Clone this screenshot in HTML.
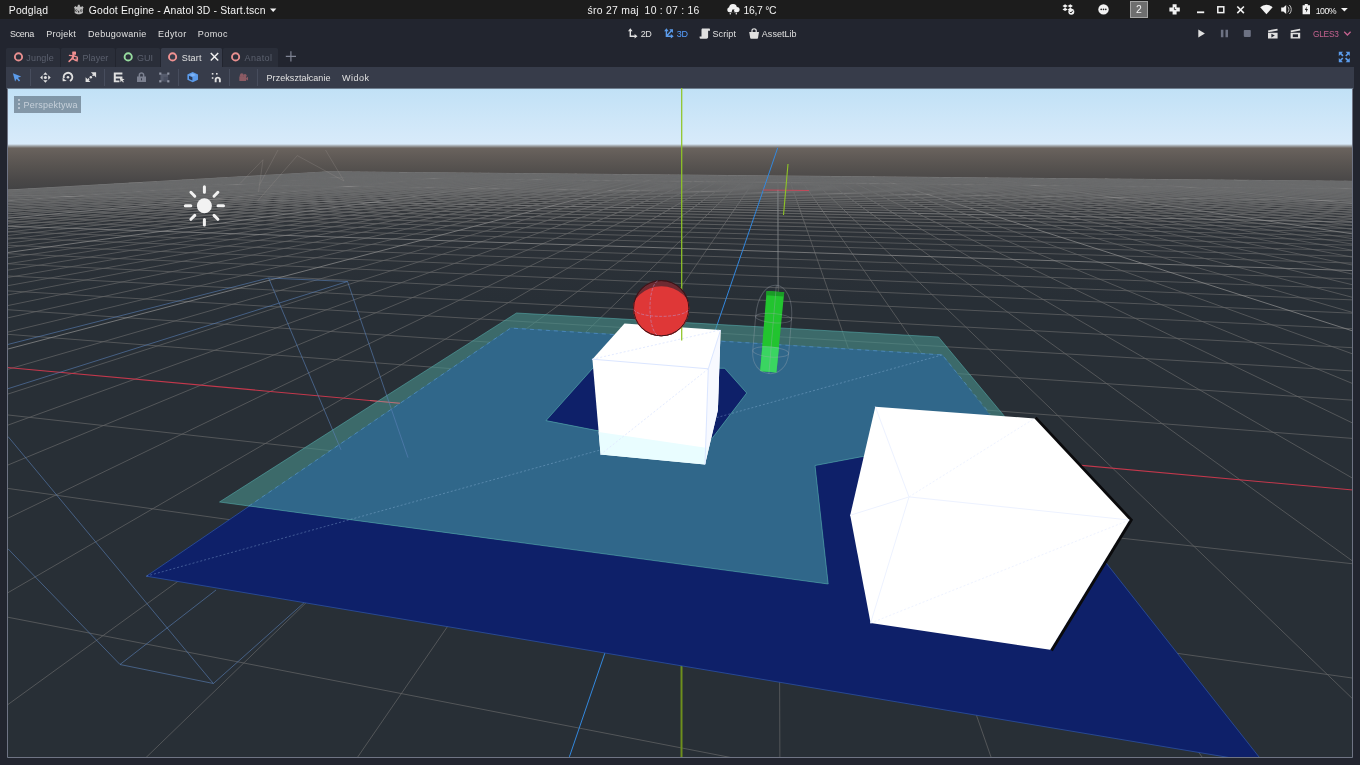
<!DOCTYPE html><html lang="pl"><head><meta charset="utf-8"><title>Godot Engine - Anatol 3D - Start.tscn</title><style>
html,body{margin:0;padding:0;background:#22252f;overflow:hidden}body{width:1360px;height:765px;position:relative;font-family:"Liberation Sans", sans-serif;-webkit-font-smoothing:antialiased}.a{position:absolute}.t{position:absolute;white-space:nowrap;line-height:1;margin:0;padding:0}#os{left:0;top:0;width:1360px;height:18.8px;background:#1c1c1c}.tab{top:48px;height:19px;background:#2a2e39;border-radius:1.5px 1.5px 0 0}.tab.sel{background:#373c4a}#bar{left:6.4px;top:66.6px;width:1347.4px;height:22px;background:#373c4a}#vp{position:absolute;left:7px;top:88px}#ic{position:absolute;left:0;top:0}#txt{position:absolute;left:0;top:0;width:1360px;height:765px;will-change:transform}
</style></head><body>
<div id="os" class="a"></div>
<div class="a tab" style="left:6.4px;width:53.8px"></div>
<div class="a tab" style="left:61.2px;width:53.8px"></div>
<div class="a tab" style="left:116.0px;width:44.2px"></div>
<div class="a tab sel" style="left:160.7px;width:61.4px"></div>
<div class="a tab" style="left:223.1px;width:55.1px"></div>
<div id="bar" class="a"></div>
<svg id="vp" width="1346" height="670" viewBox="7 88 1346 670">
<defs><linearGradient id="sky" x1="0" y1="89" x2="0" y2="146" gradientUnits="userSpaceOnUse"><stop offset="0" stop-color="#c1e1f6"/><stop offset="0.5" stop-color="#cde6f8"/><stop offset="1" stop-color="#d9ebfa"/></linearGradient><linearGradient id="gnd" x1="0" y1="146" x2="0" y2="300" gradientUnits="userSpaceOnUse"><stop offset="0" stop-color="#6c655f"/><stop offset="0.065" stop-color="#615b57"/><stop offset="0.13" stop-color="#575350"/><stop offset="0.22" stop-color="#4a4848"/><stop offset="0.35" stop-color="#3a3c3f"/><stop offset="0.55" stop-color="#2d3238"/><stop offset="1" stop-color="#282f36"/></linearGradient><linearGradient id="hor" x1="0" y1="144" x2="0" y2="148" gradientUnits="userSpaceOnUse"><stop offset="0" stop-color="#d9ebfa"/><stop offset="0.45" stop-color="#a3a9ad"/><stop offset="1" stop-color="#6c655f"/></linearGradient><linearGradient id="farg" x1="0" y1="170" x2="0" y2="238" gradientUnits="userSpaceOnUse"><stop offset="0" stop-color="#fff"/><stop offset="0.3" stop-color="#fff"/><stop offset="1" stop-color="#000"/></linearGradient><mask id="farm" maskUnits="userSpaceOnUse" x="0" y="160" width="1360" height="80"><rect x="0" y="160" width="1360" height="80" fill="url(#farg)"/></mask><clipPath id="navyclip"><polygon points="510.8,328.1 942.2,354.9 1264.1,763.4 146.4,576.2"/></clipPath></defs>
<rect x="7" y="88.6" width="1346" height="58" fill="url(#sky)"/>
<rect x="7" y="146" width="1346" height="612" fill="url(#gnd)"/>
<rect x="7" y="144" width="1346" height="4" fill="url(#hor)"/>
<g fill="none" stroke-width="1" shape-rendering="auto">
<path stroke="#646566" stroke-opacity=".72" d="M336.8 171.9L0.0 191.4M322.2 172.2L1360.0 182.0M344.5 172.0L0.0 192.3M315.0 172.6L1360.0 182.7M352.1 172.0L0.0 193.2M307.5 173.0L1360.0 183.3M359.9 172.1L0.0 194.2M299.7 173.5L1360.0 184.1M367.6 172.2L0.0 195.3M291.7 173.9L1360.0 184.8M375.4 172.2L0.0 196.4M283.4 174.4L1360.0 185.6M383.2 172.3L0.0 197.5M274.9 174.9L1360.0 186.4M391.1 172.4L0.0 198.7M266.0 175.4L1360.0 187.2M399.1 172.5L0.0 199.9M256.8 175.9L1360.0 188.1M415.1 172.6L0.0 202.6M237.4 177.0L1360.0 190.0M423.1 172.7L0.0 204.1M227.2 177.6L1360.0 191.0M431.2 172.8L-0.0 205.6M216.6 178.2L1360.0 192.0M439.4 172.8L0.0 207.2M205.5 178.8L1360.0 193.1M447.6 172.9L0.0 208.9M194.0 179.5L1360.0 194.3M455.8 173.0L0.0 210.7M182.0 180.2L1360.0 195.5M464.1 173.1L0.0 212.6M169.5 180.9L1360.0 196.7M472.5 173.1L0.0 214.6M156.5 181.6L1360.0 198.1M480.9 173.2L0.0 216.7M142.9 182.4L1360.0 199.5M497.8 173.4L-0.0 221.4M113.9 184.0L1360.0 202.6M506.4 173.5L0.0 224.0M98.4 184.9L1360.0 204.2M515.0 173.5L0.0 226.8M82.1 185.8L1360.0 206.0M523.6 173.6L0.0 229.7M65.0 186.8L1360.0 207.9M532.3 173.7L0.0 232.9M47.1 187.8L1360.0 209.9M541.1 173.8L0.0 236.4M28.2 188.9L1360.0 212.0M549.9 173.9L0.0 240.2M8.3 190.0L1360.0 214.3M558.7 173.9L0.0 244.2M0.0 191.4L1360.0 216.8M567.6 174.0L0.0 248.7M0.0 193.1L1360.0 219.4M585.6 174.2L0.0 258.9M0.0 196.9L1360.0 225.4M594.6 174.3L0.0 264.9M0.0 199.1L1360.0 228.7M603.8 174.4L0.0 271.4M0.0 201.4L1360.0 232.3M612.9 174.4L0.0 278.8M0.0 203.9L1360.0 236.3M622.2 174.5L0.0 287.1M0.0 206.7L1360.0 240.6M631.5 174.6L0.0 296.5M-0.0 209.8L1360.0 245.4M640.8 174.7L0.0 307.2M0.0 213.2L1360.0 250.8M650.2 174.8L0.0 319.6M0.0 217.0L1360.0 256.7M659.7 174.9L0.0 334.0M0.0 221.2L1360.0 263.3M678.8 175.0L0.0 371.6M0.0 231.4L1360.0 279.2M688.4 175.1L0.0 396.6M0.0 237.7L1360.0 289.0M698.1 175.2L0.0 428.0M0.0 244.9L1360.0 300.2M707.9 175.3L0.0 468.3M0.0 253.3L1360.0 313.5M717.7 175.4L0.0 522.0M0.0 263.4L1360.0 329.1M727.6 175.5L0.0 597.3M0.0 275.5L1360.0 348.1M737.5 175.6L0.0 710.3M0.0 290.4L1360.0 371.4M747.5 175.7L138.3 765.0M-0.0 309.2L1360.0 400.7M757.6 175.8L352.2 765.0M0.0 333.7L1360.0 439.0M777.9 176.0L779.9 765.0M0.0 414.1L1360.0 564.6M788.2 176.1L993.8 765.0M0.0 487.3L1360.0 679.1M798.5 176.2L1207.6 765.0M0.0 615.7L769.4 765.0M808.9 176.3L1360.0 705.9M819.4 176.3L1360.0 566.4M830.0 176.4L1360.0 482.5M840.6 176.5L1360.0 426.6M851.2 176.6L1360.0 386.6M862.0 176.7L1360.0 356.6M883.7 176.9L1360.0 314.6M894.6 177.0L1360.0 299.3M905.7 177.1L1360.0 286.6M916.8 177.3L1360.0 275.8M927.9 177.4L1360.0 266.6M939.2 177.5L1360.0 258.6M950.5 177.6L1360.0 251.6M961.9 177.7L1360.0 245.4M973.4 177.8L1360.0 239.9M996.6 178.0L1360.0 230.5M1008.4 178.1L1360.0 226.5M1020.2 178.2L1360.0 222.9M1032.0 178.3L1360.0 219.6M1044.0 178.4L1360.0 216.5M1056.1 178.5L1360.0 213.7M1068.2 178.7L1360.0 211.1M1080.4 178.8L1360.0 208.7M1092.7 178.9L1360.0 206.5M1117.6 179.1L1360.0 202.5M1130.2 179.2L1360.0 200.7M1142.8 179.3L1360.0 199.0M1155.6 179.5L1360.0 197.4M1168.4 179.6L1360.0 195.9M1181.3 179.7L1360.0 194.5M1194.4 179.8L1360.0 193.1M1207.5 179.9L1360.0 191.9M1220.7 180.1L1360.0 190.7M1247.4 180.3L1360.0 188.5M1260.9 180.4L1360.0 187.4M1274.5 180.6L1360.0 186.4M1288.3 180.7L1360.0 185.5M1302.1 180.8L1360.0 184.6M1316.0 180.9L1360.0 183.8M1330.0 181.1L1360.0 183.0M1344.1 181.2L1360.0 182.2M1358.4 181.3L1360.0 181.4"/>
<path stroke="#8f8f8f" stroke-opacity=".72" d="M329.3 171.8L0.0 190.5M329.3 171.8L1360.0 181.4M407.0 172.5L0.0 201.3M247.3 176.5L1360.0 189.0M489.3 173.3L0.0 219.0M128.7 183.2L1360.0 201.0M576.6 174.1L0.0 253.6M-0.0 195.0L1360.0 222.3M669.2 175.0L0.0 351.1M0.0 226.0L1360.0 270.8M872.8 176.8L1360.0 333.3M985.0 177.9L1360.0 235.0M1105.1 179.0L1360.0 204.4M1234.0 180.2L1360.0 189.5"/>
<g mask="url(#farm)"><path stroke="#6a6b6c" d="M336.8 171.9L0.0 191.4M322.2 172.2L1360.0 182.0M344.5 172.0L0.0 192.3M315.0 172.6L1360.0 182.7M352.1 172.0L0.0 193.2M307.5 173.0L1360.0 183.3M359.9 172.1L0.0 194.2M299.7 173.5L1360.0 184.1M367.6 172.2L0.0 195.3M291.7 173.9L1360.0 184.8M375.4 172.2L0.0 196.4M283.4 174.4L1360.0 185.6M383.2 172.3L0.0 197.5M274.9 174.9L1360.0 186.4M391.1 172.4L0.0 198.7M266.0 175.4L1360.0 187.2M399.1 172.5L0.0 199.9M256.8 175.9L1360.0 188.1M415.1 172.6L0.0 202.6M237.4 177.0L1360.0 190.0M423.1 172.7L0.0 204.1M227.2 177.6L1360.0 191.0M431.2 172.8L-0.0 205.6M216.6 178.2L1360.0 192.0M439.4 172.8L0.0 207.2M205.5 178.8L1360.0 193.1M447.6 172.9L0.0 208.9M194.0 179.5L1360.0 194.3M455.8 173.0L0.0 210.7M182.0 180.2L1360.0 195.5M464.1 173.1L0.0 212.6M169.5 180.9L1360.0 196.7M472.5 173.1L0.0 214.6M156.5 181.6L1360.0 198.1M480.9 173.2L0.0 216.7M142.9 182.4L1360.0 199.5M497.8 173.4L-0.0 221.4M113.9 184.0L1360.0 202.6M506.4 173.5L0.0 224.0M98.4 184.9L1360.0 204.2M515.0 173.5L0.0 226.8M82.1 185.8L1360.0 206.0M523.6 173.6L0.0 229.7M65.0 186.8L1360.0 207.9M532.3 173.7L0.0 232.9M47.1 187.8L1360.0 209.9M541.1 173.8L0.0 236.4M28.2 188.9L1360.0 212.0M549.9 173.9L0.0 240.2M8.3 190.0L1360.0 214.3M558.7 173.9L0.0 244.2M0.0 191.4L1360.0 216.8M567.6 174.0L0.0 248.7M0.0 193.1L1360.0 219.4M585.6 174.2L0.0 258.9M0.0 196.9L1360.0 225.4M594.6 174.3L0.0 264.9M0.0 199.1L1360.0 228.7M603.8 174.4L0.0 271.4M0.0 201.4L1360.0 232.3M612.9 174.4L0.0 278.8M0.0 203.9L1360.0 236.3M622.2 174.5L0.0 287.1M0.0 206.7L1360.0 240.6M631.5 174.6L0.0 296.5M-0.0 209.8L1360.0 245.4M640.8 174.7L0.0 307.2M0.0 213.2L1360.0 250.8M650.2 174.8L0.0 319.6M0.0 217.0L1360.0 256.7M659.7 174.9L0.0 334.0M0.0 221.2L1360.0 263.3M678.8 175.0L0.0 371.6M0.0 231.4L1360.0 279.2M688.4 175.1L0.0 396.6M0.0 237.7L1360.0 289.0M698.1 175.2L0.0 428.0M0.0 244.9L1360.0 300.2M707.9 175.3L0.0 468.3M0.0 253.3L1360.0 313.5M717.7 175.4L0.0 522.0M0.0 263.4L1360.0 329.1M727.6 175.5L0.0 597.3M0.0 275.5L1360.0 348.1M737.5 175.6L0.0 710.3M0.0 290.4L1360.0 371.4M747.5 175.7L138.3 765.0M-0.0 309.2L1360.0 400.7M757.6 175.8L352.2 765.0M0.0 333.7L1360.0 439.0M777.9 176.0L779.9 765.0M0.0 414.1L1360.0 564.6M788.2 176.1L993.8 765.0M0.0 487.3L1360.0 679.1M798.5 176.2L1207.6 765.0M0.0 615.7L769.4 765.0M808.9 176.3L1360.0 705.9M819.4 176.3L1360.0 566.4M830.0 176.4L1360.0 482.5M840.6 176.5L1360.0 426.6M851.2 176.6L1360.0 386.6M862.0 176.7L1360.0 356.6M883.7 176.9L1360.0 314.6M894.6 177.0L1360.0 299.3M905.7 177.1L1360.0 286.6M916.8 177.3L1360.0 275.8M927.9 177.4L1360.0 266.6M939.2 177.5L1360.0 258.6M950.5 177.6L1360.0 251.6M961.9 177.7L1360.0 245.4M973.4 177.8L1360.0 239.9M996.6 178.0L1360.0 230.5M1008.4 178.1L1360.0 226.5M1020.2 178.2L1360.0 222.9M1032.0 178.3L1360.0 219.6M1044.0 178.4L1360.0 216.5M1056.1 178.5L1360.0 213.7M1068.2 178.7L1360.0 211.1M1080.4 178.8L1360.0 208.7M1092.7 178.9L1360.0 206.5M1117.6 179.1L1360.0 202.5M1130.2 179.2L1360.0 200.7M1142.8 179.3L1360.0 199.0M1155.6 179.5L1360.0 197.4M1168.4 179.6L1360.0 195.9M1181.3 179.7L1360.0 194.5M1194.4 179.8L1360.0 193.1M1207.5 179.9L1360.0 191.9M1220.7 180.1L1360.0 190.7M1247.4 180.3L1360.0 188.5M1260.9 180.4L1360.0 187.4M1274.5 180.6L1360.0 186.4M1288.3 180.7L1360.0 185.5M1302.1 180.8L1360.0 184.6M1316.0 180.9L1360.0 183.8M1330.0 181.1L1360.0 183.0M1344.1 181.2L1360.0 182.2M1358.4 181.3L1360.0 181.4"/></g>
</g>
<path d="M0.0 366.8L1360.0 490.7" stroke="#c4384c" stroke-width="1.05" fill="none"/>
<path d="M777.7 147.8L569.4 756.8" stroke="#3388de" stroke-width="1" fill="none"/>
<path d="M681.5 660V757" stroke="#6d8f1c" stroke-width="2" fill="none"/>
<path d="M763 190L809 190.500" stroke="#c24a5a" stroke-width="1.200" fill="none"/>
<path d="M788 164L783.500 215" stroke="#8fc526" stroke-width="1.100" fill="none"/>
<path d="M240 183.500L263 159.700L258.500 192M278 150L259.400 185M257.600 201L297.300 155.600L344 181M325.500 150L344 181" stroke="#9a958f" stroke-opacity=".28" stroke-width="1" fill="none"/>
<polygon points="510.8,328.1 942.2,354.9 1264.1,763.4 146.4,576.2" fill="#0e2069" stroke="#2c50a3" stroke-width="1" stroke-opacity=".8"/>
<path d="M516.5 313.0L938.5 337.0L1004.0 415.7L1012.0 440.0L900.0 470.0L862.7 456.5L815.0 465.5L828.2 584.0L219.5 502.0ZM546.0 420.6L593.0 368.0L724.7 368.3L746.7 393.0L709.6 441.6L597.0 430.6Z" fill="#49938e" fill-opacity="0.6" fill-rule="evenodd"/>
<path d="M516.5 313.0L938.5 337.0L1004.0 415.7L1012.0 440.0L900.0 470.0L862.7 456.5L815.0 465.5L828.2 584.0L219.5 502.0ZM546.0 420.6L593.0 368.0L724.7 368.3L746.7 393.0L709.6 441.6L597.0 430.6Z" fill="#30678a" fill-rule="evenodd" clip-path="url(#navyclip)"/>
<path d="M248.7 506.2L510.75 328.1L942.2 354.9L990 413.7" stroke="#5b9bdc" stroke-opacity=".55" stroke-width="1" stroke-dasharray="4 4" fill="none"/>
<path d="M370 400.5L400 403.3" stroke="#e0707c" stroke-opacity=".6" stroke-width="1.1" fill="none"/>
<g stroke="#5a80b8" stroke-opacity=".6" stroke-width="1" fill="none"><path d="M268.600 278L347.500 281.500M268.600 278L341 449.800M347.500 281.500L408 457.600M268.600 278L7 344.700M347.500 281.500L7 389"/><path d="M8 436.500L213.400 683.500L120 664.500L8 548.800M120 664.500L216 590M213.400 683.500L303.800 603"/></g>
<path d="M146.3 576.2L942.2 354.9" stroke="#9fc4e8" stroke-opacity=".35" stroke-width="1" stroke-dasharray="2 2" fill="none"/>
<path d="M516.5 313.0L938.5 337.0L1004.0 415.7L1012.0 440.0L900.0 470.0L862.7 456.5L815.0 465.5L828.2 584.0L219.5 502.0ZM546.0 420.6L593.0 368.0L724.7 368.3L746.7 393.0L709.6 441.6L597.0 430.6Z" fill="none" stroke="#58b0b0" stroke-opacity=".55" stroke-width="1"/>
<polygon points="592.4,359.2 624.5,323.5 720.6,329.9 717.9,410.0 705.0,464.4 600.6,454.5" fill="#ffffff"/>
<polygon points="708.3,368.8 720.6,329.9 717.9,410.0 705.0,464.4" fill="#f7f9ff"/>
<polygon points="598.6,432.0 707.5,448.0 705.0,464.4 600.6,454.5" fill="#e9fdff"/>
<path d="M592.4 359.2L708.3 368.8L720.6 329.9M708.3 368.8L705 464.4" stroke="#dbe6ff" stroke-width="1" fill="none"/>
<path d="M592.4 359.2L720.6 329.9M708.3 368.8L600.6 454.5" stroke="#e3ebff" stroke-width="1" stroke-dasharray="2 2" fill="none"/>
<path d="M681.7 88V340.4" stroke="#8fc526" stroke-width="1.25" fill="none"/>
<clipPath id="sph"><circle cx="661.2" cy="308.2" r="28.1"/></clipPath>
<circle cx="661.2" cy="308.2" r="28.1" fill="#4a1a20"/>
<circle cx="661.2" cy="308.2" r="27.2" fill="#6e2a31"/>
<ellipse cx="661.4" cy="315.6" rx="31" ry="29.4" fill="#df3737" clip-path="url(#sph)"/>
<circle cx="661.2" cy="308.2" r="27.6" fill="none" stroke="#3a1418" stroke-width="1"/>
<path d="M633.8 309.5A27.5 7.5 0 0 0 688.6 309.5M657.5 281A9 27.5 0 0 0 658.5 335.6" stroke="#b9a0d8" stroke-opacity=".5" stroke-width="1" stroke-dasharray="3 1.5" fill="none"/>
<polygon points="766.6,291.0 784.2,292.3 776.4,372.6 760.2,371.0" fill="#22c42f"/>
<polygon points="762.4,346.0 779.0,347.2 776.4,372.6 760.2,371.0" fill="#3ad561"/>
<polygon points="766.6,291.0 784.2,292.3 783.8,296.6 766.2,295.2" fill="#1a9a27"/>
<g stroke="#a9aeb6" stroke-opacity=".32" stroke-width="1" fill="none"><path d="M777.9 190V288"/><g transform="rotate(4.8 772.3 329.5)"><path d="M754.6 318C754.6 274 790.6 274 790.6 318V352C790.6 381 754.6 381 754.6 352Z"/><ellipse cx="772.6" cy="318" rx="18" ry="4.6"/><ellipse cx="772.6" cy="352" rx="18" ry="5"/><path d="M772.6 285V374"/></g></g>
<path d="M1035.5 417.8L1131.2 520L1051.5 650.5" stroke="#0a0a0c" stroke-width="3" fill="none" stroke-linejoin="miter"/>
<polygon points="875.3,406.7 1034.5,418.4 1129.4,520.0 1050.2,649.8 870.6,623.1 850.2,515.3" fill="#ffffff"/>
<path d="M909 496.9L875.3 406.7M909 496.9L850.2 515.3M909 496.9L1129.4 520M909 496.9L870.6 623.1" stroke="#edf2ff" stroke-width="1" fill="none"/>
<path d="M909 496.9L1034.5 418.4M870.6 623.1L1129.4 520" stroke="#eef3ff" stroke-width="1" stroke-dasharray="2 2" fill="none"/>
<g stroke="#f2f2f2" stroke-width="3" stroke-linecap="round"><circle cx="204.4" cy="205.8" r="7.5" fill="#f2f2f2" stroke="none"/><path d="M218.0 205.8L223.5 205.8M214.0 215.4L217.9 219.3M204.4 219.4L204.4 224.9M194.8 215.4L190.9 219.3M190.8 205.8L185.3 205.8M194.8 196.2L190.9 192.3M204.4 192.2L204.4 186.7M214.0 196.2L217.9 192.3" fill="none"/></g>
<rect x="14" y="96" width="67" height="17" fill="#1a2230" fill-opacity="0.4"/>
<g fill="#c3cdd8" fill-opacity="0.8"><rect x="18" y="99" width="2" height="2"/><rect x="18" y="103" width="2" height="2"/><rect x="18" y="107" width="2" height="2"/></g>
<path d="M7.5 88.6V757.5H1352.5V88.6" fill="none" stroke="#6f7484" stroke-width="1"/>
</svg>
<svg id="ic" width="1360" height="89" viewBox="0 0 1360 89">
<!-- OS bar: godot app icon -->
<path d="M74 7.400l1.300-1.400 1.200 1.100 1.100-.5.300-1.900h1.800l.3 1.900 1.100.5 1.200-1.100 1.300 1.400-.7 1.300v4.300c-1.300.9-3 1.200-4.100 1.200s-2.800-.3-4.100-1.200v-4.300z" fill="#b9b9b9"/>
<g fill="#1c1c1c"><circle cx="76.300" cy="10.600" r="1.150"/><circle cx="81.100" cy="10.600" r="1.150"/><rect x="78.200" y="10.800" width="1" height="1.800"/></g>
<g fill="#e8e8e8"><circle cx="76.300" cy="10.600" r=".55"/><circle cx="81.100" cy="10.600" r=".55"/></g>
<path d="M270 8.600h6.400l-3.200 3.400z" fill="#f2f2f2"/>
<!-- weather -->
<g fill="#f2f2f2"><circle cx="733" cy="8" r="3.900"/><circle cx="729.800" cy="9.800" r="2.500"/><circle cx="736.900" cy="9.600" r="2.700"/><rect x="729.800" y="8.500" width="7.200" height="3.800"/></g>
<g fill="#1c1c1c"><path d="M732.400 9.500l2.200 0-1 1.800 1.200 0-2.600 3.200.6-2.300-1.200 0z"/></g>
<g fill="#f2f2f2"><circle cx="730.300" cy="13.800" r=".8"/><circle cx="736.300" cy="13.800" r=".8"/></g>
<!-- tray -->
<g fill="#f2f2f2"><path d="M1062.500 6l2.600-1.700 2.600 1.700-2.600 1.700zM1067.700 6l2.600-1.700 2.600 1.700-2.600 1.700zM1062.500 9.400l2.600-1.700 2.600 1.700-2.600 1.700zM1067.700 9.400l2.600-1.700 2.600 1.700-2.600 1.700z"/><circle cx="1071.300" cy="11.800" r="3"/></g>
<path d="M1069.800 11.900l1.100 1.100 2-2.300" stroke="#1c1c1c" stroke-width="1" fill="none"/>
<circle cx="1103.500" cy="9.400" r="5.200" fill="#f2f2f2"/>
<g fill="#1c1c1c"><circle cx="1101.200" cy="9.400" r=".8"/><circle cx="1103.500" cy="9.400" r=".8"/><circle cx="1105.800" cy="9.400" r=".8"/></g>
<rect x="1130.500" y="1.500" width="17" height="16" fill="#6e6e6e" stroke="#a4a4a4" stroke-width="1"/>
<path d="M1172.600 4.200h4v3.200h3.200v4h-3.200v3.200h-4v-3.200h-3.200v-4h3.200z" fill="#f2f2f2"/>
<path d="M1174.400 7.200v2.400h1.800" stroke="#1c1c1c" stroke-width=".8" fill="none"/>
<rect x="1197" y="11.400" width="7.200" height="1.800" fill="#f2f2f2"/>
<rect x="1217.800" y="6.800" width="6" height="5.800" fill="none" stroke="#f2f2f2" stroke-width="1.500"/>
<path d="M1237.300 6.500l6.600 6.600M1243.900 6.500l-6.600 6.600" stroke="#f2f2f2" stroke-width="1.600" fill="none"/>
<path d="M1260.200 7.300a8.800 8.800 0 0 1 12.400 0l-6.200 6.900z" fill="#f2f2f2"/>
<path d="M1281.200 7.600h2.200l2.800-2.600v9l-2.800-2.600h-2.200z" fill="#f2f2f2"/>
<path d="M1287.700 6.600a4 4 0 0 1 0 5.800M1289.400 5a6.300 6.300 0 0 1 0 9" stroke="#bdbdbd" stroke-width="1" fill="none"/>
<path d="M1304.800 4h3v1.200h2.200v9h-7.400v-9h2.200z" fill="#f2f2f2"/>
<path d="M1306.800 6.400l-2 3.600h1.500l-.5 2.800 2.200-3.800h-1.500z" fill="#1c1c1c"/>
<path d="M1341 8h6.800l-3.400 3.600z" fill="#f2f2f2"/>
<!-- run buttons -->
<path d="M1198.300 29.600l6.600 3.900-6.600 3.900z" fill="#e0e0e0"/>
<path d="M1220.900 29.700h2.500v7.600h-2.500zM1225.500 29.700h2.500v7.600h-2.500z" fill="#6d7283"/>
<rect x="1243.800" y="29.900" width="7" height="7" rx=".8" fill="#6d7283"/>
<g fill="#e0e0e0"><path d="M1268 30.400l9.400-1.600.3 1.800-9.400 1.600zM1268 32.800h9.600v5.600h-9.600z"/></g>
<path d="M1271.400 33.700l3.400 1.900-3.400 1.900z" fill="#22252f"/>
<g fill="#e0e0e0"><path d="M1290.600 30.400l9.400-1.600.3 1.800-9.400 1.600zM1290.600 32.800h9.600v5.600h-9.600z"/></g>
<rect x="1292.800" y="34.300" width="5.200" height="2.800" fill="#22252f"/>
<path d="M1344.200 31.800l3.200 3.200 3.200-3.200" stroke="#c4628f" stroke-width="1.300" fill="none"/>
<!-- center workspace icons -->
<g stroke="#e0e0e0" stroke-width="1.400" fill="none"><path d="M630.300 30v6.200h5.500"/></g>
<path d="M628 31.200l2.300-2.900 2.300 2.900zM634.600 33.900l2.900 2.300-2.900 2.300z" fill="#e0e0e0"/>
<g stroke="#5b9bea" stroke-width="1.400" fill="none"><path d="M666.400 30v6.200h5.500M666.400 36.200l5.200-5.600"/></g>
<path d="M664.100 31.200l2.300-2.900 2.300 2.900zM670.800 33.900l2.900 2.300-2.900 2.300zM669.300 29.300l3.700-.1-.1 3.700z" fill="#5b9bea"/>
<path d="M702.600 28.600h6.600c.6 0 .8.600.8 1.200v1h-1.900v6.200c0 1-.7 1.700-1.700 1.700h-5.900c-.6 0-.9-.6-.9-1.200v-1h1.900v-6.200c0-1 .2-1.700 1.100-1.700z" fill="#e0e0e0"/>
<path d="M749.200 32h9.800l-1 6c-.1.500-.4.700-.8.700h-6.200c-.4 0-.7-.2-.8-.7zM751.400 32v-1.600c0-3 5.400-3 5.400 0V32h-1.200v-1.400c0-1.500-3-1.500-3 0V32z" fill="#e0e0e0"/>
<!-- fullscreen -->
<g fill="#5b9bea"><path d="M1338.800 51.800h4.200l-1.400 1.400 2 2-1.200 1.200-2-2-1.600 1.500zM1349.800 51.800v4.200l-1.400-1.400-2 2-1.200-1.200 2-2-1.500-1.600zM1338.800 62.200v-4.200l1.400 1.400 2-2 1.200 1.200-2 2 1.500 1.600zM1349.800 62.200h-4.200l1.400-1.400-2-2 1.200-1.200 2 2 1.600-1.500z"/></g>
<!-- tabs -->
<g fill="none" stroke-width="1.900"><circle cx="18.500" cy="56.900" r="3.600" stroke="#e88f8f"/><circle cx="128.200" cy="56.900" r="3.600" stroke="#97dc9f"/><circle cx="172.600" cy="56.900" r="3.600" stroke="#f19292"/><circle cx="235.600" cy="56.900" r="3.600" stroke="#e88f8f"/></g>
<g fill="#f08f90"><rect x="72.200" y="51.500" width="3.800" height="3.300" rx=".5"/></g>
<g stroke="#f08f90" fill="none" stroke-linecap="round" stroke-linejoin="round"><path d="M73.600 55.200L72.500 58.300" stroke-width="2.100"/><path d="M73.200 55.800L69.400 55.300" stroke-width="1.300"/><path d="M74.400 56.100L77.300 57.200L77.500 59.300L75.900 59.200" stroke-width="1.250"/><path d="M72.300 58.400L69.100 61.400" stroke-width="1.500"/><path d="M72.800 58.600L75.200 60.300L77.400 60.900" stroke-width="1.400"/></g>
<path d="M210.800 53l7.400 7.500M218.200 53l-7.400 7.500" stroke="#f0f0f0" stroke-width="1.500" fill="none"/>
<path d="M285.800 56.300h10.200M290.900 51.200v10.200" stroke="#7f8494" stroke-width="1.200" fill="none"/>
<!-- toolbar separators -->
<g stroke="#474d5d" stroke-width="1"><path d="M30.500 69v17M104.500 69v17M178.500 69v17M229.500 69v17M257.500 69v17"/></g>
<!-- select -->
<path d="M12.900 73.300l8.300 3.200-3.300 1.200 2.200 2.700-1.200 1-2.200-2.700-1.600 2.900z" fill="#5b9bea"/>
<!-- move -->
<g fill="#e0e0e0"><path d="M45.400 72.200l2.200 2.500h-4.400zM45.400 82.800l2.200-2.500h-4.400zM40.100 77.500l2.500-2.200v4.400zM50.700 77.500l-2.500-2.200v4.400z"/><circle cx="45.400" cy="77.500" r="1.500"/></g>
<!-- rotate -->
<g><path d="M69.900 81A4.300 4.300 0 1 0 63.900 78.400" stroke="#e0e0e0" stroke-width="1.900" fill="none"/><path d="M62.500 78l4.300 2.900-4.100.3z" fill="#e0e0e0"/><circle cx="68" cy="77.200" r="1.300" fill="#e0e0e0"/></g>
<!-- scale -->
<g fill="#e0e0e0"><path d="M90.900 72.200h5.200v5.200zM85.600 77.200v4.900h4.900z"/><circle cx="90.800" cy="77.200" r="1.250"/></g>
<path d="M93.700 74.600l-1.100 1.100M88 79.700l1.100-1.100" stroke="#e0e0e0" stroke-width="1.500" fill="none"/>
<!-- list select -->
<g fill="#e0e0e0"><path d="M113.800 72.600h8.600v2h-6.600v2h6.600v1.800h-6.600v2h3.600v1.900h-5.600z"/><path d="M119.800 77.400l4.800 2.200-1.900.6 1.200 1.700-.9.600-1.200-1.700-1.200 1.500z"/></g>
<!-- lock -->
<g fill="#7b8090"><path d="M137 76.600h9v5.400h-9zM138.600 76.600v-1.400c0-3.800 5.800-3.800 5.800 0v1.400h-1.500v-1.400c0-1.900-2.800-1.900-2.800 0v1.400z"/></g>
<rect x="141" y="78.300" width="1" height="2" fill="#373c4a"/>
<!-- group -->
<g><rect x="160.500" y="73.800" width="7.600" height="7.600" fill="#555b6c"/><rect x="163.600" y="76.800" width="4.500" height="4.600" fill="#4a5062"/><g fill="#8f94a3"><rect x="159.200" y="72.500" width="2.200" height="2.200"/><rect x="167.200" y="72.500" width="2.200" height="2.200"/><rect x="159.200" y="80.200" width="2.200" height="2.200"/><rect x="167.200" y="80.200" width="2.200" height="2.200"/></g></g>
<!-- cube -->
<path d="M192.700 72l5.300 2.500v5.300l-5.300 2.500-5.300-2.500v-5.300z" fill="#5b9bea"/>
<path d="M189 75.700l3.400 1.600v3.300l-3.400-1.600z" fill="#2b3a57"/><path d="M192.700 73.600l3.300 1.500-3.300 1.500-3.300-1.500z" fill="#7fb3f2"/>
<!-- snap -->
<g fill="#e0e0e0"><rect x="211.800" y="73" width="1.600" height="1.600"/><rect x="216" y="73" width="1.600" height="1.600"/><rect x="211.800" y="77.200" width="1.600" height="1.600"/><path d="M214.700 82.200v-2.700c0-3.800 6.100-3.800 6.100 0v2.700h-1.900v-2.700c0-1.500-2.300-1.500-2.300 0v2.700z"/></g>
<!-- camera -->
<g fill="#8c5b64"><circle cx="241.800" cy="75.200" r="1.900"/><circle cx="245" cy="75.600" r="1.600"/><rect x="239.300" y="76.200" width="6.800" height="4.800" rx=".6"/><path d="M246.100 78l1.900-1.300v3.800l-1.900-1.300z"/></g>
</svg>

<div id="txt">
<header id="os-panel">
<span class="t" id="o1" style="left:8.80px;top:5.55px;font-size:10.40px;color:#f2f2f2;letter-spacing:0.177px;">Podgląd</span>
<span class="t" id="o2" style="left:88.80px;top:5.55px;font-size:10.40px;color:#f2f2f2;letter-spacing:0.159px;">Godot Engine - Anatol 3D - Start.tscn</span>
<span class="t" id="o3" style="left:587.60px;top:5.55px;font-size:10.40px;color:#f2f2f2;letter-spacing:0.265px;">śro 27 maj</span>
<span class="t" id="o4" style="left:644.60px;top:5.55px;font-size:10.40px;color:#f2f2f2;letter-spacing:0.255px;">10 : 07 : 16</span>
<span class="t" id="o5" style="left:743.60px;top:5.55px;font-size:10.40px;color:#f2f2f2;letter-spacing:-0.314px;">16,7 °C</span>
<span class="t" id="o6" style="left:1136.00px;top:4.55px;font-size:10.40px;color:#f2f2f2;letter-spacing:0.000px;">2</span>
<span class="t" id="o7" style="left:1315.80px;top:6.85px;font-size:8.80px;color:#f2f2f2;letter-spacing:-0.600px;">100%</span>
</header>
<nav id="menu-bar">
<span class="t" id="m1" style="left:10.00px;top:29.75px;font-size:9.00px;color:#e0e0e0;letter-spacing:-0.320px;">Scena</span>
<span class="t" id="m2" style="left:46.25px;top:29.75px;font-size:9.00px;color:#e0e0e0;letter-spacing:0.247px;">Projekt</span>
<span class="t" id="m3" style="left:88.00px;top:29.75px;font-size:9.00px;color:#e0e0e0;letter-spacing:0.320px;">Debugowanie</span>
<span class="t" id="m4" style="left:158.00px;top:29.75px;font-size:9.00px;color:#e0e0e0;letter-spacing:0.447px;">Edytor</span>
<span class="t" id="m5" style="left:197.75px;top:29.75px;font-size:9.00px;color:#e0e0e0;letter-spacing:0.434px;">Pomoc</span>
</nav>
<nav id="workspace-switch">
<span class="t" id="c1" style="left:640.70px;top:29.75px;font-size:9.00px;color:#e0e0e0;letter-spacing:-0.416px;">2D</span>
<span class="t" id="c2" style="left:676.70px;top:29.75px;font-size:9.00px;color:#569eff;letter-spacing:-0.216px;">3D</span>
<span class="t" id="c3" style="left:712.40px;top:29.75px;font-size:9.00px;color:#e0e0e0;letter-spacing:0.117px;">Script</span>
<span class="t" id="c4" style="left:761.80px;top:29.75px;font-size:9.00px;color:#e0e0e0;letter-spacing:0.038px;">AssetLib</span>
</nav>
<div id="renderer">
<span class="t" id="g1" style="left:1313.00px;top:30.10px;font-size:8.30px;color:#c4628f;letter-spacing:-0.241px;">GLES3</span>
</div>
<div id="scene-tabs">
<span class="t" id="t1" style="left:26.25px;top:53.75px;font-size:9.00px;color:#5b606e;letter-spacing:0.194px;">Jungle</span>
<span class="t" id="t2" style="left:82.50px;top:53.75px;font-size:9.00px;color:#5b606e;letter-spacing:0.047px;">Player</span>
<span class="t" id="t3" style="left:137.00px;top:53.75px;font-size:9.00px;color:#5b606e;letter-spacing:-0.008px;">GUI</span>
<span class="t" id="t4" style="left:181.75px;top:53.75px;font-size:9.00px;color:#e0e0e0;letter-spacing:0.184px;">Start</span>
<span class="t" id="t5" style="left:244.50px;top:53.75px;font-size:9.00px;color:#5b606e;letter-spacing:0.394px;">Anatol</span>
</div>
<div id="spatial-toolbar">
<span class="t" id="b1" style="left:266.50px;top:73.75px;font-size:9.00px;color:#e0e0e0;letter-spacing:0.069px;">Przekształcanie</span>
<span class="t" id="b2" style="left:342.00px;top:73.75px;font-size:9.00px;color:#e0e0e0;letter-spacing:0.496px;">Widok</span>
</div>
<main id="viewport-overlay">
<span class="t" id="v1" style="left:23.50px;top:100.75px;font-size:9.00px;color:#c6d0da;letter-spacing:0.247px;">Perspektywa</span>
</main>
</div>
</body></html>
